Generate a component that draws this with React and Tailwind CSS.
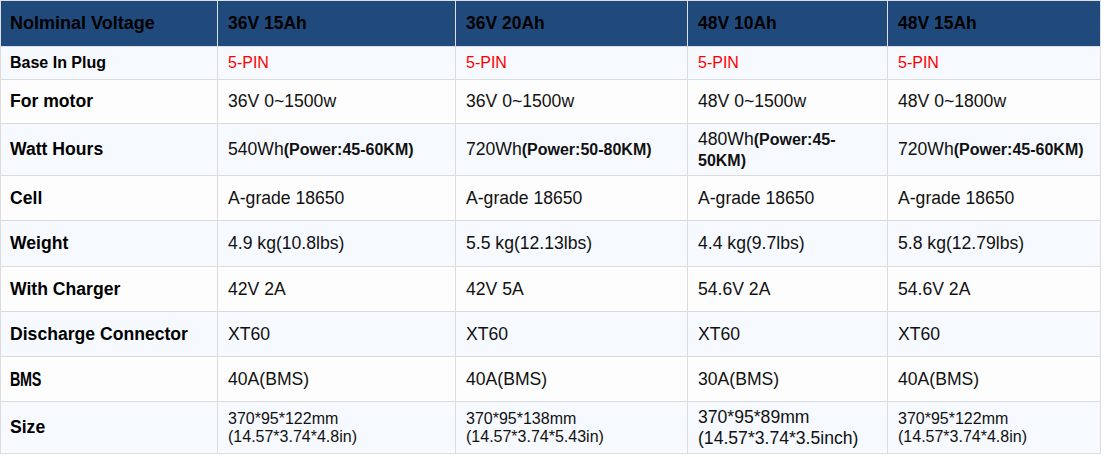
import React from "react";

const headers = ["36V 15Ah", "36V 20Ah", "48V 10Ah", "48V 15Ah"];

const Power = ({ wh, km }) => (
  <>
    {wh}
    <span className="font-bold text-[16px]">{km}</span>
  </>
);

const SizeCell = ({ a, b, big }) => (
  <div className={big ? "text-[17.6px] leading-[21px]" : "text-[16px] leading-[18px]"}>
    {a}
    <br />
    {b}
  </div>
);

const rows = [
  {
    label: "Base In Plug",
    h: "h-[33px]",
    labelClass: "text-[16px]",
    cells: ["5-PIN", "5-PIN", "5-PIN", "5-PIN"],
    red: true,
  },
  {
    label: "For motor",
    h: "h-[44px]",
    cells: ["36V 0~1500w", "36V 0~1500w", "48V 0~1500w", "48V 0~1800w"],
  },
  {
    label: "Watt Hours",
    h: "h-[52px]",
    cells: [
      <Power wh="540Wh" km="(Power:45-60KM)" />,
      <Power wh="720Wh" km="(Power:50-80KM)" />,
      <div className="leading-[20px]">
        <Power wh="480Wh" km="(Power:45-50KM)" />
      </div>,
      <Power wh="720Wh" km="(Power:45-60KM)" />,
    ],
  },
  {
    label: "Cell",
    h: "h-[45px]",
    cells: ["A-grade 18650", "A-grade 18650", "A-grade 18650", "A-grade 18650"],
  },
  {
    label: "Weight",
    h: "h-[46px]",
    cells: ["4.9 kg(10.8lbs)", "5.5 kg(12.13lbs)", "4.4 kg(9.7lbs)", "5.8 kg(12.79lbs)"],
  },
  {
    label: "With Charger",
    h: "h-[45px]",
    cells: ["42V 2A", "42V 5A", "54.6V 2A", "54.6V 2A"],
  },
  {
    label: "Discharge Connector",
    h: "h-[45px]",
    cells: ["XT60", "XT60", "XT60", "XT60"],
  },
  {
    label: "BMS",
    h: "h-[45px]",
    bms: true,
    cells: ["40A(BMS)", "40A(BMS)", "30A(BMS)", "40A(BMS)"],
  },
  {
    label: "Size",
    h: "h-[52px]",
    cells: [
      <SizeCell a="370*95*122mm" b="(14.57*3.74*4.8in)" />,
      <SizeCell a="370*95*138mm" b="(14.57*3.74*5.43in)" />,
      <SizeCell a="370*95*89mm" b="(14.57*3.74*3.5inch)" big />,
      <SizeCell a="370*95*122mm" b="(14.57*3.74*4.8in)" />,
    ],
  },
];

export default function App() {
  return (
    <div className="w-[1104px] h-[457px] bg-white font-['Liberation_Sans',Arial,sans-serif]">
      <table className="w-[1100px] table-fixed border-collapse">
        <colgroup>
          <col className="w-[217px]" />
          <col className="w-[238px]" />
          <col className="w-[232px]" />
          <col className="w-[200px]" />
          <col className="w-[213px]" />
        </colgroup>
        <thead>
          {/* header row */}
          <tr className="h-[46px] bg-[#214a7c]">
            <th className="border border-[#dcdfe3] pl-[9px] pr-[10px] text-left font-bold text-[18px] text-black">
              Nolminal Voltage
            </th>
            {headers.map((h) => (
              <th
                key={h}
                className="border border-[#dcdfe3] px-[10px] text-left font-bold text-[17.5px] text-black"
              >
                {h}
              </th>
            ))}
          </tr>
        </thead>
        <tbody>
          {rows.map((row, i) => (
            <tr
              key={row.label}
              className={`${row.h} ${i % 2 === 0 ? "bg-[#f6f9fe]" : "bg-[#fdfdfd]"}`}
            >
              <td
                className={`border border-[#dcdcdc] pl-[9px] pr-[10px] align-middle font-bold text-black ${
                  row.labelClass || "text-[17.6px]"
                }`}
              >
                {row.bms ? (
                  <span className="inline-block origin-left scale-x-[0.72] text-[20px] font-black tracking-[-0.5px]">
                    BMS
                  </span>
                ) : (
                  row.label
                )}
              </td>
              {row.cells.map((c, j) => (
                <td
                  key={j}
                  className={`border border-[#dcdcdc] px-[10px] align-middle ${
                    row.red ? "text-[16px] text-[#ff0000]" : "text-[17.6px] text-[#111]"
                  }`}
                >
                  {c}
                </td>
              ))}
            </tr>
          ))}
        </tbody>
      </table>
    </div>
  );
}
